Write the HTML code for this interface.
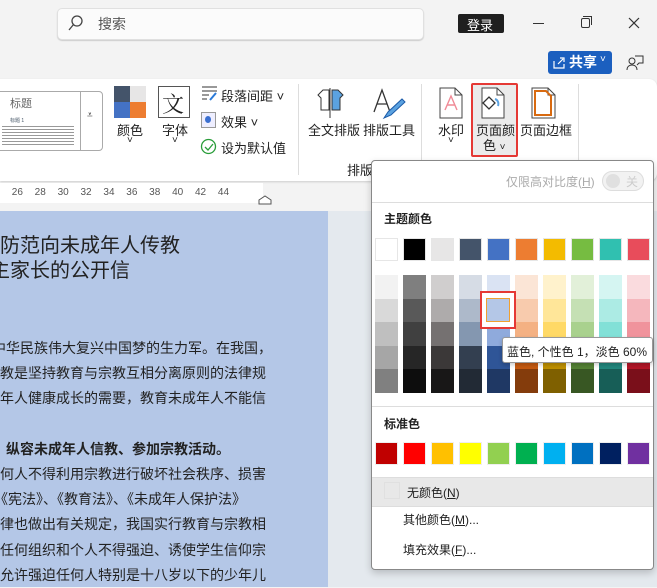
<!DOCTYPE html>
<html><head><meta charset="utf-8">
<style>
*{margin:0;padding:0;box-sizing:border-box}
body{width:657px;height:587px;overflow:hidden;background:#f3f3f3;font-family:"Liberation Sans","Noto Sans CJK SC",sans-serif;position:relative;color:#222;font-size:13px}
.a{position:absolute}
.t{position:absolute;white-space:nowrap}
</style></head><body>
<!-- title bar -->
<div class="a" style="left:57px;top:8px;width:367px;height:32px;background:#fbfbfb;border:1px solid #e0e0e0;border-radius:5px;box-shadow:0 1px 1px #ccc"></div>
<svg class="a" style="left:68px;top:14px" width="16" height="18"><circle cx="9" cy="7" r="5" fill="none" stroke="#444" stroke-width="1.3"/><line x1="5.5" y1="10.5" x2="1" y2="16" stroke="#444" stroke-width="1.3"/></svg>
<div class="t" style="left:98px;top:14px;font-size:14px;color:#555">搜索</div>
<div class="a" style="left:458px;top:14px;width:46px;height:19px;background:#1f1f1f;border-radius:2px"></div>
<div class="t" style="left:467px;top:15px;font-size:13px;color:#fff">登录</div>
<div class="a" style="left:533px;top:23px;width:11px;height:1px;background:#333"></div>
<div class="a" style="left:581px;top:18px;width:9px;height:10px;border:1px solid #333;border-radius:2px"></div>
<div class="a" style="left:583px;top:16px;width:9px;height:9px;border-top:1px solid #333;border-right:1px solid #333"></div>
<svg class="a" style="left:628px;top:17px" width="12" height="12"><path d="M1 1L11 11M11 1L1 11" stroke="#333" stroke-width="1.2"/></svg>
<div class="a" style="left:548px;top:51px;width:64px;height:23px;background:#1b5fbf;border-radius:3px"></div>
<svg class="a" style="left:552px;top:55px" width="14" height="15"><path d="M2 6v7h10V9M6 9l5-5M8 3h4v4" fill="none" stroke="#fff" stroke-width="1.2"/></svg>
<div class="t" style="left:569px;top:52px;font-size:14px;color:#fff;font-weight:bold">共享</div>
<div class="t" style="left:600px;top:54px;font-size:10px;color:#fff">˅</div>
<svg class="a" style="left:626px;top:54px" width="18" height="18"><circle cx="6" cy="7" r="3" fill="none" stroke="#333"/><path d="M1 16c0-4 3-5 5-5s5 1 5 5M9 2h8v7h-4l-2 2" fill="none" stroke="#333"/></svg>
<!-- ribbon -->
<div class="a" style="left:0;top:79px;width:657px;height:102px;background:#fff;border-radius:0 8px 8px 0;box-shadow:0 1px 2px #ccc"></div>
<div class="a" style="left:-6px;top:91px;width:109px;height:60px;border:1px solid #aaa;border-radius:4px;background:#fff"></div>
<div class="a" style="left:80px;top:91px;width:1px;height:60px;background:#aaa"></div>
<div class="t" style="left:10px;top:95px;font-size:11px;color:#666">标题</div>
<div class="t" style="left:10px;top:117px;font-size:5px;color:#456">标题 1</div>
<div class="a" style="left:2px;top:124px;width:72px;height:22px;background:repeating-linear-gradient(#fff 0 2px,#999 2px 3px)"></div>
<div class="t" style="left:87px;top:110px;font-size:10px">⩡</div>
<div class="a" style="left:114px;top:86px;width:16px;height:16px;background:#44546a"></div>
<div class="a" style="left:130px;top:86px;width:16px;height:16px;background:#e7e6e6"></div>
<div class="a" style="left:114px;top:102px;width:16px;height:16px;background:#4472c4"></div>
<div class="a" style="left:130px;top:102px;width:16px;height:16px;background:#ed7d31"></div>
<div class="t" style="left:117px;top:120px;font-size:13px">颜色</div>
<div class="t" style="left:127px;top:135px;font-size:10px">˅</div>
<div class="a" style="left:158px;top:86px;width:32px;height:32px;border:1px solid #555"></div>
<div class="t" style="left:162px;top:88px;font-size:22px;font-family:'Noto Serif CJK SC',serif">文</div>
<div class="t" style="left:162px;top:120px;font-size:13px">字体</div>
<div class="t" style="left:172px;top:135px;font-size:10px">˅</div>
<svg class="a" style="left:201px;top:85px" width="18" height="16"><path d="M1 2h15M1 6h15M1 10h7M1 14h5" stroke="#333"/><path d="M9 15l6-7" stroke="#2a7ad8" stroke-width="2"/></svg>
<div class="t" style="left:221px;top:86px;font-size:13px">段落间距 ˅</div>
<div class="a" style="left:201px;top:112px;width:15px;height:16px;border:1px solid #999;background:#eef"></div>
<div class="a" style="left:205px;top:116px;width:6px;height:7px;border-radius:50%;background:#3a6fd0"></div>
<div class="t" style="left:221px;top:112px;font-size:13px">效果 ˅</div>
<svg class="a" style="left:200px;top:138px" width="17" height="17"><circle cx="8.5" cy="8.5" r="7" fill="none" stroke="#2a9d3a" stroke-width="1.3"/><path d="M5 9l3 3 5-6" fill="none" stroke="#2a9d3a" stroke-width="1.3"/></svg>
<div class="t" style="left:221px;top:138px;font-size:13px">设为默认值</div>
<div class="a" style="left:298px;top:84px;width:1px;height:91px;background:#ddd"></div>
<svg class="a" style="left:315px;top:88px" width="30" height="30"><path d="M8 2l-5 5 3 3v12h8V2z" fill="#fff" stroke="#333"/><path d="M17 2h6l5 5-3 3v12h-8z" fill="#5ba2e0" stroke="#333"/><line x1="15" y1="0" x2="15" y2="30" stroke="#333"/></svg>
<div class="t" style="left:308px;top:120px;font-size:13px">全文排版</div>
<svg class="a" style="left:372px;top:88px" width="34" height="32"><path d="M2 24L10 2L18 24M5 16h10" fill="none" stroke="#333" stroke-width="1.3"/><path d="M12 30l4-6 14-13 3 3-14 13z" fill="#5ba2e0" stroke="#1a5aa8"/></svg>
<div class="t" style="left:363px;top:120px;font-size:13px">排版工具</div>
<div class="t" style="left:347px;top:160px;font-size:13px">排版</div>
<div class="a" style="left:421px;top:84px;width:1px;height:91px;background:#ddd"></div>
<svg class="a" style="left:439px;top:87px" width="24" height="32"><path d="M1 1h15l7 7v23H1z" fill="#fff" stroke="#444"/><path d="M16 1v7h7" fill="none" stroke="#444"/><path d="M6 23l6-14 6 14M8 18h8" fill="none" stroke="#f08a96" stroke-width="1.4"/></svg>
<div class="t" style="left:438px;top:120px;font-size:13px">水印</div>
<div class="t" style="left:448px;top:135px;font-size:10px">˅</div>
<div class="a" style="left:471px;top:83px;width:47px;height:74px;background:#ebebeb;border:2px solid #e53935;border-radius:2px"></div>
<svg class="a" style="left:480px;top:87px" width="26" height="32"><path d="M2 1h15l7 7v23H2z" fill="#fff" stroke="#444"/><path d="M17 1v7h7" fill="none" stroke="#444"/><path d="M3 16l6-6 6 6-6 6z" fill="#fff" stroke="#333" stroke-width="1.3"/><path d="M15 12c3 1 4 4 3 7" fill="none" stroke="#5ba2e0" stroke-width="2"/></svg>
<div class="t" style="left:476px;top:120px;font-size:13px">页面颜</div>
<div class="t" style="left:483px;top:135px;font-size:13px">色 <span style="font-size:10px">˅</span></div>
<svg class="a" style="left:531px;top:87px" width="26" height="32"><path d="M1 1h16l7 7v23H1z" fill="#fff" stroke="#444"/><path d="M17 1v7h7" fill="none" stroke="#444"/><path d="M4 4h11l5 5v19H4z" fill="none" stroke="#d86a10" stroke-width="2"/></svg>
<div class="t" style="left:520px;top:120px;font-size:13px">页面边框</div>
<div class="a" style="left:578px;top:84px;width:1px;height:91px;background:#ddd"></div>
<!-- ruler -->
<div class="a" style="left:0;top:183px;width:263px;height:20px;background:#fff"></div>
<div class="t" style="left:0;top:187px;font-size:10px;color:#555;word-spacing:9px">&nbsp;26 28 30 32 34 36 38 40 42 44</div>
<svg class="a" style="left:258px;top:195px" width="14" height="10"><path d="M1 9V5l6-4 6 4v4z" fill="#fff" stroke="#555"/></svg>
<!-- doc -->
<div class="a" style="left:0;top:211px;width:328px;height:376px;background:#b4c7e7"></div>
<div class="a" style="left:328px;top:211px;width:329px;height:376px;background:#e4e9ee"></div>
<div class="t" style="left:0;top:229px;font-size:20px;color:#222">防范向未成年人传教</div>
<div class="t" style="left:-10px;top:254px;font-size:20px;color:#222">主家长的公开信</div>
<div style="position:absolute;left:-8px;top:336px;font-size:14px;line-height:25.2px;color:#222;white-space:nowrap">
中华民族伟大复兴中国梦的生力军。在我国，<br>
<span style="margin-left:8px">教是坚持教育与宗教互相分离原则的法律规</span><br>
<span style="margin-left:8px">年人健康成长的需要，教育未成年人不能信</span><br><br>
<b style="margin-left:14px">纵容未成年人信教、参加宗教活动。</b><br>
<span style="margin-left:8px">何人不得利用宗教进行破坏社会秩序、损害</span><br>
<span style="margin-left:2px">《宪法》、《教育法》、《未成年人保护法》</span><br>
<span style="margin-left:8px">律也做出有关规定，我国实行教育与宗教相</span><br>
<span style="margin-left:8px">任何组织和个人不得强迫、诱使学生信仰宗</span><br>
<span style="margin-left:8px">允许强迫任何人特别是十八岁以下的少年儿</span>
</div>
<!-- panel -->
<div class="a" style="left:371px;top:160px;width:283px;height:410px;background:#fff;border:1px solid #888;border-radius:4px;box-shadow:0 3px 8px rgba(0,0,0,.2)"></div>
<div class="t" style="left:506px;top:173px;font-size:12px;color:#aaa">仅限高对比度(<u>H</u>)</div>
<div class="a" style="left:602px;top:171px;width:42px;height:20px;border:1px solid #ddd;border-radius:10px;background:#f2f2f2"></div>
<div class="a" style="left:606px;top:174px;width:14px;height:14px;border-radius:50%;background:#e0e0e0"></div>
<div class="t" style="left:626px;top:173px;font-size:12px;color:#ccc">关</div>
<div class="a" style="left:372px;top:202px;width:281px;height:1px;background:#ddd"></div>
<div class="t" style="left:384px;top:210px;font-size:12px;font-weight:bold">主题颜色</div>
<div id="th"></div>
<div class="a" style="left:372px;top:406px;width:281px;height:1px;background:#ddd"></div>
<div class="t" style="left:384px;top:415px;font-size:12px;font-weight:bold">标准色</div>
<div class="a" style="left:372px;top:477px;width:281px;height:30px;background:#e8e8e8;border-top:1px solid #ddd;border-bottom:1px solid #ddd"></div>
<div class="a" style="left:384px;top:482px;width:16px;height:17px;border:1px solid #e0e0e0"></div>
<div class="t" style="left:407px;top:484px;font-size:12px">无颜色(<u>N</u>)</div>
<div class="t" style="left:403px;top:511px;font-size:12px">其他颜色(<u>M</u>)...</div>
<div class="t" style="left:403px;top:541px;font-size:12px">填充效果(<u>F</u>)...</div>
<div class="a" style="left:480px;top:291px;width:36px;height:38px;border:2px solid #e53935;background:#fff"></div>
<div class="a" style="left:486px;top:298px;width:24px;height:24px;background:#b4c7e7;border:1.5px solid #f0a030"></div>
<div class="a" style="left:502px;top:337px;width:151px;height:26px;background:#fff;border:1px solid #999;border-radius:3px;box-shadow:0 2px 4px rgba(0,0,0,.2)"></div>
<div class="t" style="left:507px;top:343px;font-size:12px">蓝色, 个性色 1，淡色 60%</div>
<script>
var cols=[["#ffffff","#f2f2f2","#d9d9d9","#bfbfbf","#a6a6a6","#808080"],
["#000000","#7f7f7f","#595959","#404040","#262626","#0d0d0d"],
["#e7e6e6","#d0cece","#aeabab","#757171","#3b3838","#181717"],
["#44546a","#d6dce5","#adb9ca","#8497b0","#333f50","#222a35"],
["#4472c4","#dae3f3","#b4c7e7","#8faadc","#2f5597","#1f3864"],
["#ed7d31","#fbe5d6","#f8cbad","#f4b183","#c55a11","#843c0c"],
["#f3bb00","#fff2cc","#ffe699","#ffd966","#bf9000","#7f6000"],
["#76bc41","#e2f0d9","#c5e0b4","#a9d18e","#548235","#385723"],
["#30c0b0","#d5f5f2","#acebe4","#82e0d7","#22887e","#175e57"],
["#e84c5b","#fadbde","#f5b7bd","#f0939c","#b31627","#7a0f1a"]];
var std=["#c00000","#ff0000","#ffc000","#ffff00","#92d050","#00b050","#00b0f0","#0070c0","#002060","#7030a0"];
var h="",ys=[275,299,322,346,369];
for(var i=0;i<10;i++){var x=375+28*i;
h+='<div class="a" style="left:'+x+'px;top:238px;width:23px;height:23px;background:'+cols[i][0]+';border:1px solid #e6e6e6"></div>';
for(var j=0;j<5;j++){h+='<div class="a" style="left:'+x+'px;top:'+ys[j]+'px;width:23px;height:'+(j==4?24:24)+'px;background:'+cols[i][j+1]+'"></div>';}
h+='<div class="a" style="left:'+x+'px;top:442px;width:23px;height:23px;background:'+std[i]+';border:1px solid #eee"></div>';}
document.getElementById('th').innerHTML=h;
</script>
</body></html>
